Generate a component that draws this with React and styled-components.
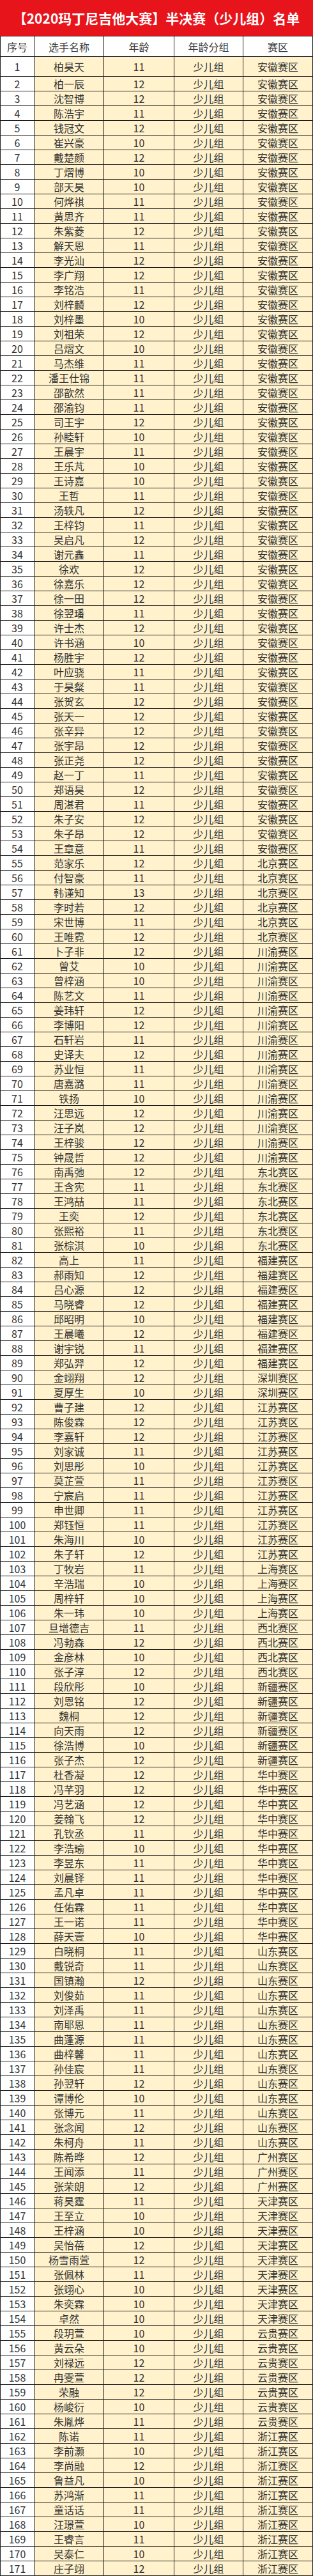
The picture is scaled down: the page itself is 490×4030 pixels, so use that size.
import React from "react";
import styled, { createGlobalStyle } from "styled-components";

const GlobalStyle = createGlobalStyle`
  html, body {
    margin: 0;
    padding: 0;
    background: #ffffff;
  }
  body {
    font-family: "Noto Sans CJK SC", "Noto Sans", sans-serif;
  }
`;

const COLS = "52px 108px 109px 107px 108px";

const Page = styled.div`
  width: 490px;
  background: #ffffff;
`;

const TitleBar = styled.h1`
  margin: 0;
  height: 56px;
  display: flex;
  align-items: center;
  justify-content: center;
  background: #e8141c;
  color: #ffffff;
  font-size: 21px;
  font-weight: 700;
  letter-spacing: 0;
  white-space: nowrap;
`;

const Sheet = styled.div`
  display: flex;
  flex-direction: column;
  gap: 1px;
  padding: 1px;
  background: #1c1c1c;
`;

const Row = styled.div`
  display: grid;
  grid-template-columns: ${COLS};
  gap: 1px;
  height: ${(props) => props.$h}px;
`;

const Cell = styled.div`
  display: flex;
  align-items: center;
  justify-content: center;
  background: ${(props) => (props.$plain ? "#ffffff" : "#fff2cc")};
  color: #333333;
  font-size: 16px;
  line-height: 1;
  white-space: nowrap;
`;

const HeadCell = styled(Cell)`
  background: #ffffff;
  color: #3a3a3a;
`;

const regions = [
  [54, "安徽赛区"],
  [60, "北京赛区"],
  [75, "川渝赛区"],
  [81, "东北赛区"],
  [89, "福建赛区"],
  [91, "深圳赛区"],
  [102, "江苏赛区"],
  [106, "上海赛区"],
  [110, "西北赛区"],
  [116, "新疆赛区"],
  [128, "华中赛区"],
  [142, "山东赛区"],
  [145, "广州赛区"],
  [154, "天津赛区"],
  [161, "云贵赛区"],
  [171, "浙江赛区"],
];

const raw = `柏昊天 11|柏一辰 12|沈智博 12|陈浩宇 11|钱冠文 12|崔兴豪 10|戴楚颜 12|丁熠博 10|部天昊 10|何烨祺 11|
黄思齐 11|朱紫菱 12|解天恩 11|李光汕 12|李广翔 12|李铭浩 11|刘梓麟 12|刘梓墨 10|刘祖荣 12|吕熠文 10|
马杰维 11|潘王仕锦 11|邵歆然 11|邵渝钧 11|司王宇 12|孙睦轩 10|王晨宇 11|王乐芃 10|王诗嘉 10|王哲 11|
汤轶凡 12|王梓钧 11|吴启凡 12|谢元鑫 11|徐欢 12|徐嘉乐 12|徐一田 12|徐翌璠 11|许士杰 12|许书涵 10|
杨胜宇 12|叶应骁 11|于昊粲 11|张贺玄 12|张天一 12|张辛异 12|张宇昂 12|张正尧 12|赵一丁 11|郑语昊 12|
周湛君 11|朱子安 12|朱子昂 12|王章意 11|范家乐 12|付智豪 11|韩谨知 13|李时若 12|宋世博 11|王唯霓 12|
卜子非 12|曾艾 10|曾梓涵 10|陈艺文 11|姜玮轩 12|李博阳 12|石轩岩 11|史译夫 12|苏业恒 11|唐嘉潞 11|
铁扬 10|汪思远 12|汪子岚 12|王梓骏 12|钟晟哲 12|南禹弛 12|王含宪 11|王鸿喆 11|王奕 12|张熙裕 11|
张棕淇 10|高上 11|郝雨知 12|吕心源 12|马晓睿 12|邱昭明 10|王晨曦 12|谢宇锐 11|郑弘羿 12|金翊翔 12|
夏厚生 10|曹子建 12|陈俊霖 12|李嘉轩 12|刘家诚 11|刘思彤 10|莫芷萱 11|宁宸启 11|申世卿 11|郑钰恒 11|
朱海川 10|朱子轩 12|丁牧岩 11|辛浩瑞 10|周梓轩 10|朱一玮 10|旦增德吉 11|冯勃森 12|金彦林 10|张子淳 12|
段欣彤 10|刘恩铭 12|魏桐 12|向天雨 12|徐浩博 10|张子杰 12|杜香凝 12|冯芊羽 12|冯艺涵 12|姜翰飞 12|
孔钦丞 11|李浩瑜 10|李昱东 11|刘晨铎 11|孟凡卓 11|任佑霖 11|王一诺 11|薛天壹 10|白晓桐 11|戴锐奇 11|
国镇瀚 12|刘俊茹 11|刘泽禹 11|南耶恩 11|曲蓬源 11|曲梓馨 11|孙佳宸 11|孙翌轩 12|谭博伦 10|张博元 11|
张念闻 12|朱柯舟 11|陈希晔 12|王闻添 11|张荣朗 12|蒋昊霆 11|王至立 10|王梓涵 10|吴怡蓓 12|杨雪雨萱 12|
张佩林 11|张翊心 10|朱奕霖 10|卓然 10|段玥萱 10|黄云朵 10|刘禄远 12|冉雯萱 12|荣融 12|杨峻衍 10|
朱胤烨 11|陈诺 11|李前灏 10|李尚融 12|鲁益凡 10|苏鸿渐 11|童话话 11|汪璟萱 10|王睿言 11|吴泰仁 10|
庄子翊 12`;

const regionOf = (n) => regions.find(([last]) => n <= last)[1];

const players = raw
  .split("|")
  .map((s) => s.trim())
  .filter(Boolean)
  .map((entry, i) => {
    const [name, age] = entry.split(" ");
    return { no: i + 1, name, age, region: regionOf(i + 1) };
  });

const headers = ["序号", "选手名称", "年龄", "年龄分组", "赛区"];

const App = () => {
  return (
    <Page>
      <GlobalStyle />
      <TitleBar>【2020玛丁尼吉他大赛】半决赛（少儿组）名单</TitleBar>
      <Sheet>
        <Row $h={31}>
          {headers.map((h) => (
            <HeadCell key={h}>{h}</HeadCell>
          ))}
        </Row>
        {players.map((p) => (
          <Row key={p.no} $h={p.no === 1 ? 30 : 22}>
            <Cell $plain>{p.no}</Cell>
            <Cell>{p.name}</Cell>
            <Cell>{p.age}</Cell>
            <Cell>少儿组</Cell>
            <Cell>{p.region}</Cell>
          </Row>
        ))}
      </Sheet>
    </Page>
  );
};

export default App;
